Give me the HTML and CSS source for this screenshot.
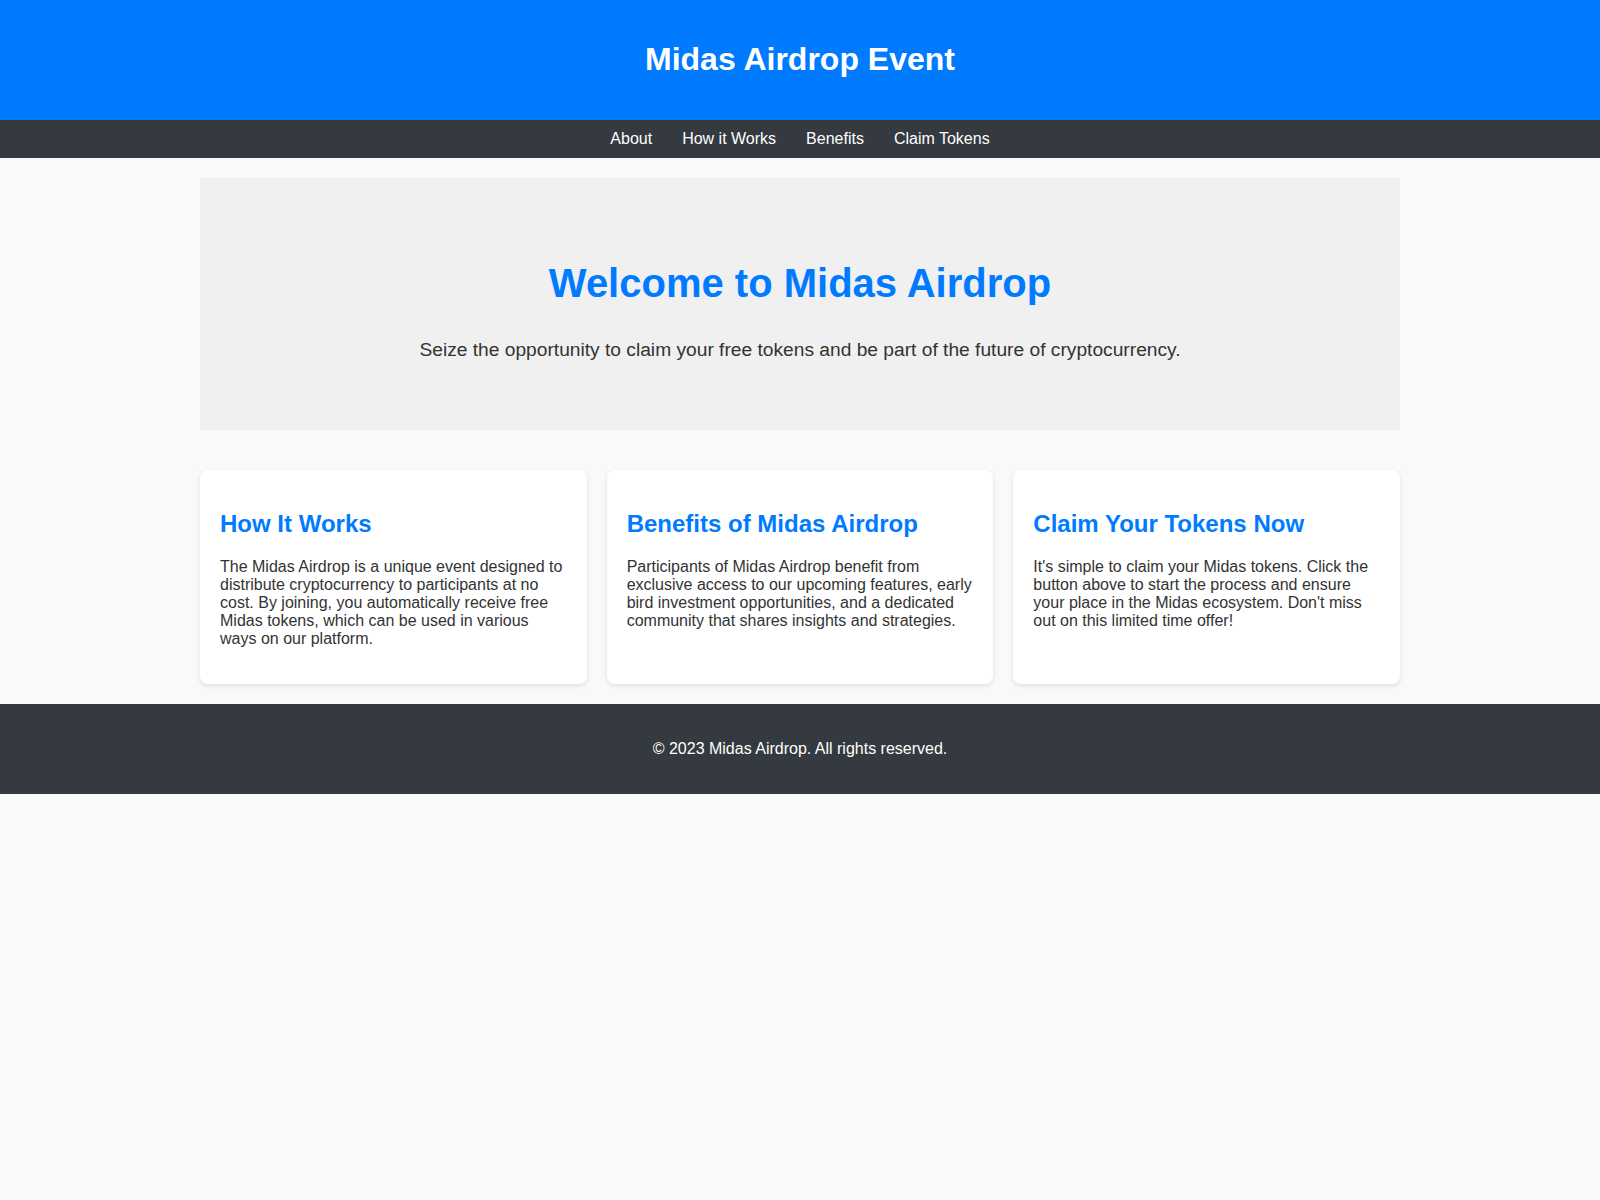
FILE: index.html
```html
<!DOCTYPE html>
<html lang="en">
<head>
  <meta charset="UTF-8" />
  <title>Midas Airdrop Event</title>
  <meta name="viewport" content="width=device-width, initial-scale=1.0"/>
  <link rel="stylesheet" href="styles.css">
</head>
<body>
  <header>
    <h1>Midas Airdrop Event</h1>
  </header>

  <nav>
    <a href="#about">About</a>
    <a href="#how">How it Works</a>
    <a href="#benefits">Benefits</a>
    <a href="#claim">Claim Tokens</a>
  </nav>

  <main class="container">
    <div class="hero" id="about">
      <h1>Welcome to Midas Airdrop</h1>
      <p>Seize the opportunity to claim your free tokens and be part of the future of cryptocurrency.</p>
    </div>

    <div class="cards">
      <div class="card" id="how">
        <h2>How It Works</h2>
        <p>The Midas Airdrop is a unique event designed to distribute cryptocurrency to participants at no cost. By joining, you automatically receive free Midas tokens, which can be used in various ways on our platform.</p>
      </div>
      <div class="card" id="benefits">
        <h2>Benefits of Midas Airdrop</h2>
        <p>Participants of Midas Airdrop benefit from exclusive access to our upcoming features, early bird investment opportunities, and a dedicated community that shares insights and strategies.</p>
      </div>
      <div class="card" id="claim">
        <h2>Claim Your Tokens Now</h2>
        <p>It's simple to claim your Midas tokens. Click the button above to start the process and ensure your place in the Midas ecosystem. Don't miss out on this limited time offer!</p>
      </div>
    </div>
  </main>

  <footer>
    <p>&copy; 2023 Midas Airdrop. All rights reserved.</p>
  </footer>
</body>
</html>
```

FILE: styles.css
```css
body {
  margin: 0;
  font-family: "Liberation Sans", Arial, sans-serif;
  background: #f8f9fa;
  color: #333;
}
header {
  background: #007bff;
  color: white;
  text-align: center;
  padding: 20px;
}
header h1 {
  font-size: 32px;
  margin: 20.5px 0 22.5px;
}
nav {
  background: #343a40;
  display: flex;
  justify-content: center;
  gap: 30px;
  padding: 10px;
}
nav a {
  color: white;
  text-decoration: none;
}
.container {
  max-width: 1200px;
  margin: 0 auto;
  padding: 20px 0;
}
.hero {
  background: #f0f0f0;
  text-align: center;
  padding: 50px 20px;
  margin-bottom: 40px;
}
.hero h1 {
  font-size: 40px;
  color: #007bff;
  margin: 33px 0 33px;
}
.hero p {
  font-size: 19.2px;
  margin: 19.2px 0;
}
.cards {
  display: grid;
  grid-template-columns: repeat(3, 1fr);
  gap: 20px;
}
.card {
  background: white;
  border-radius: 8px;
  padding: 20px;
  box-shadow: 0 2px 5px rgba(0,0,0,0.1);
}
.card h2 {
  color: #007bff;
  font-size: 24px;
  margin: 20px 0;
}
.card p {
  margin: 16px 0;
}
footer {
  background: #343a40;
  color: white;
  text-align: center;
  padding: 20px;
}
footer p {
  margin: 16px 0;
}
```
